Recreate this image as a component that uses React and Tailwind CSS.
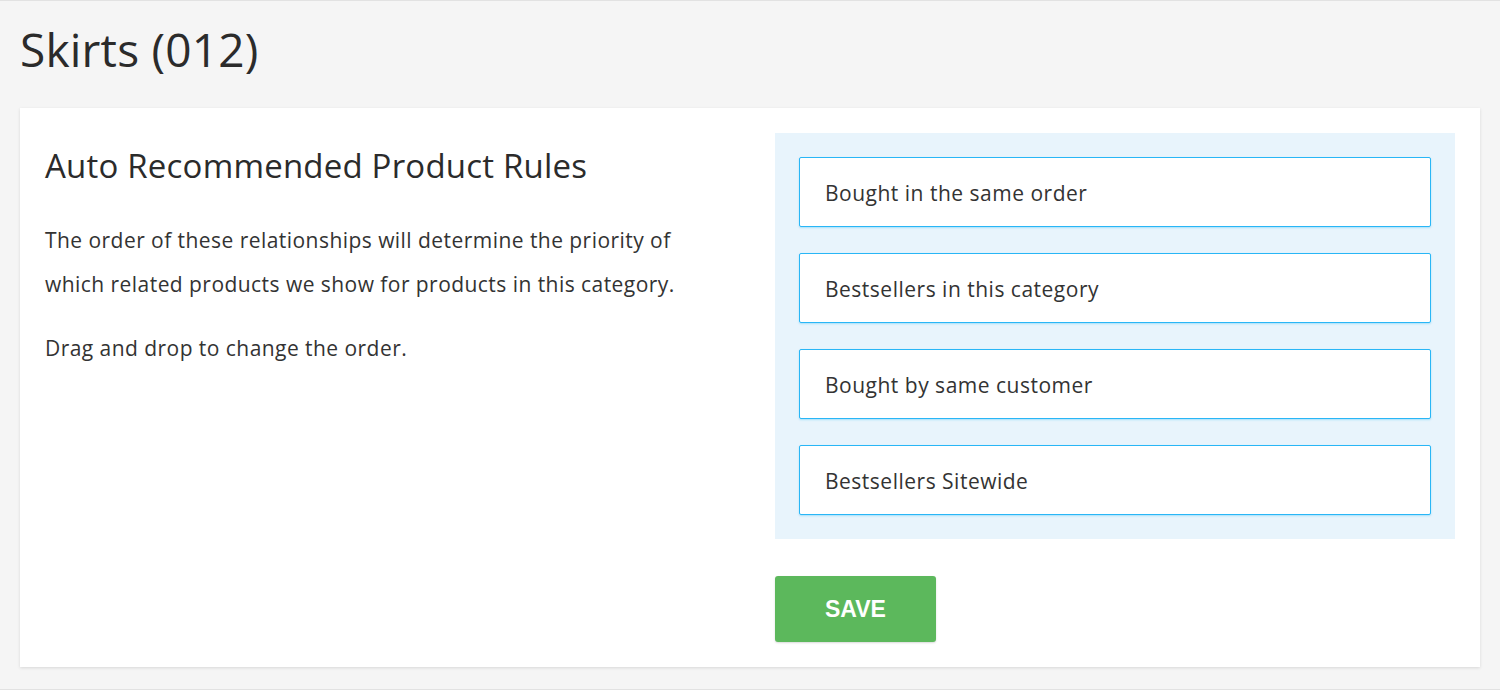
import React from 'react';

const rules = [
    'Bought in the same order',
    'Bestsellers in this category',
    'Bought by same customer',
    'Bestsellers Sitewide',
];

const App = () => {
    return (
        <div className="w-[1500px] h-[690px] bg-[#f5f5f5] border-t border-b border-[#e2e2e2] text-[#333333]" style={{ fontFamily: '"Open Sans", sans-serif' }}>
            {/* Page title */}
            <h1 className="pl-[20px] pt-[17px] h-[107px] text-[46px] leading-[62px] tracking-[0.2px] text-[#2b2b2b]">Skirts (012)</h1>

            {/* Card */}
            <div className="mx-[20px] h-[559px] bg-white shadow-[0_1px_3px_rgba(0,0,0,0.12)] p-[25px] flex">
                <div className="w-[730px] pr-[45px]">
                    <h2 className="pt-[13px] text-[33px] leading-[40px] tracking-[0.2px] text-[#2b2b2b]">Auto Recommended Product Rules</h2>
                    <p className="mt-[32px] text-[21px] leading-[44px] tracking-[0.45px]">
                        The order of these relationships will determine the priority of which related products we show for products in this category.
                    </p>
                    <p className="mt-[20px] text-[21px] leading-[44px] tracking-[0.45px]">Drag and drop to change the order.</p>
                </div>

                <div className="flex-1 flex flex-col">
                    <div className="bg-[#e8f4fc] px-[24px] py-[24px] flex flex-col gap-[26px]">
                        {rules.map((rule) => (
                            <div key={rule} className="h-[70px] bg-white border border-[#29b6f6] rounded-[2px] shadow-[0_1px_2px_rgba(41,182,246,0.35)] flex items-center pl-[25px] pt-[3px] text-[21px] tracking-[0.5px] cursor-move">
                                {rule}
                            </div>
                        ))}
                    </div>
                    <div className="mt-[37px]">
                        <button className="w-[161px] h-[66px] bg-[#5cb85c] rounded-[3px] text-white font-bold text-[23px] shadow-[0_1px_2px_rgba(0,0,0,0.15)]" style={{ fontFamily: '"Liberation Sans", Arial, sans-serif' }}>
                            SAVE
                        </button>
                    </div>
                </div>
            </div>
        </div>
    );
};

export default App;
